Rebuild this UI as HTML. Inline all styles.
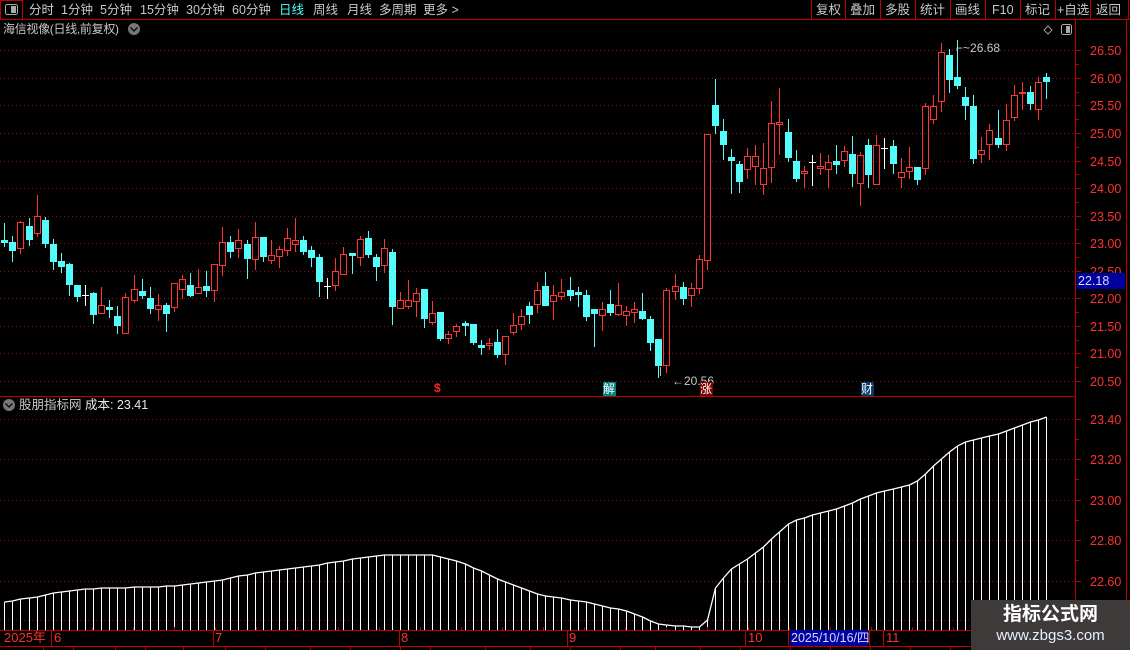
<!DOCTYPE html>
<html><head><meta charset="utf-8">
<style>
*{margin:0;padding:0;box-sizing:border-box}
body{width:1130px;height:650px;background:#000;overflow:hidden;position:relative;font-family:"Liberation Sans","Noto Sans CJK SC",sans-serif;color:#c8c8c8}
.t{position:absolute;white-space:nowrap;font-size:12.5px;line-height:14px}
svg{position:absolute;left:0;top:0}
</style></head><body>
<svg id="s" width="1130" height="650" xmlns="http://www.w3.org/2000/svg"></svg>

<div class="t" style="left:29px;top:3px;color:#d0d0d0;word-spacing:0">分时</div>
<div class="t" style="left:61px;top:3px">1分钟</div>
<div class="t" style="left:100px;top:3px">5分钟</div>
<div class="t" style="left:140px;top:3px">15分钟</div>
<div class="t" style="left:186px;top:3px">30分钟</div>
<div class="t" style="left:232px;top:3px">60分钟</div>
<div class="t" style="left:279px;top:3px;color:#54fcfc">日线</div>
<div class="t" style="left:313px;top:3px">周线</div>
<div class="t" style="left:347px;top:3px">月线</div>
<div class="t" style="left:379px;top:3px">多周期</div>
<div class="t" style="left:423px;top:3px">更多 &gt;</div>

<div class="t" style="left:816px;top:3px">复权</div>
<div class="t" style="left:850px;top:3px">叠加</div>
<div class="t" style="left:885px;top:3px">多股</div>
<div class="t" style="left:920px;top:3px">统计</div>
<div class="t" style="left:955px;top:3px">画线</div>
<div class="t" style="left:992px;top:3px">F10</div>
<div class="t" style="left:1025px;top:3px">标记</div>
<div class="t" style="left:1057px;top:3px">+自选</div>
<div class="t" style="left:1096px;top:3px">返回</div>

<div class="t" style="left:3px;top:22px;font-size:12px;letter-spacing:-0.3px">海信视像(日线,前复权)</div>
<div class="t" style="left:19px;top:398px;font-size:12.5px">股朋指标网 <span style="color:#e8e8e8">成本: 23.41</span></div>

<div class="t" style="left:672px;top:374px;font-size:12px">←20.56</div>
<div class="t" style="left:956px;top:41px;font-size:12px">⌐~26.68</div>

<div class="t" style="left:1077px;top:273px;width:48px;height:16px;background:#0000a0;color:#d8d8ff;padding-left:1px;font-size:12.5px;line-height:16px">22.18</div>

<div class="t" style="left:434px;top:381px;color:#ff2020;font-weight:bold;font-size:12px">$</div>
<div class="t" style="left:603px;top:382px;width:13px;height:14px;background:#008080;color:#fff;font-size:12px;line-height:14px">解</div>
<div class="t" style="left:700px;top:382px;width:13px;height:14px;background:#800000;color:#fff;font-size:12px;line-height:14px">涨</div>
<div class="t" style="left:861px;top:382px;width:13px;height:14px;background:#0a3a6a;color:#fff;font-size:12px;line-height:14px">财</div>

<div class="t" style="left:4px;top:631px;color:#ff3030;font-size:13px">2025年</div>
<div class="t" style="left:54px;top:631px;color:#ff3030;font-size:13px">6</div>
<div class="t" style="left:215px;top:631px;color:#ff3030;font-size:13px">7</div>
<div class="t" style="left:401px;top:631px;color:#ff3030;font-size:13px">8</div>
<div class="t" style="left:569px;top:631px;color:#ff3030;font-size:13px">9</div>
<div class="t" style="left:748px;top:631px;color:#ff3030;font-size:13px">10</div>
<div class="t" style="left:790px;top:630px;width:78px;height:16px;background:#0000a0;color:#d8d8ff;font-size:12.5px;line-height:16px;padding-left:1px">2025/10/16/四</div>
<div class="t" style="left:886px;top:631px;color:#ff3030;font-size:13px">11</div>

<div style="position:absolute;left:971px;top:600px;width:159px;height:50px;background:#3e3a3a"></div>
<div class="t" style="left:971px;top:604px;width:159px;text-align:center;color:#fff;font-weight:bold;font-size:19px;line-height:22px">指标公式网</div>
<div class="t" style="left:971px;top:627px;width:159px;text-align:center;color:#e8f0ff;font-size:15px;line-height:18px">www.zbgs3.com</div>

<script>
var s=document.getElementById('s'),h='';
function L(x1,y1,x2,y2,c,d){h+='<line x1="'+x1+'" y1="'+y1+'" x2="'+x2+'" y2="'+y2+'" stroke="'+c+'" stroke-width="1"'+(d?' stroke-dasharray="1 3"':'')+'/>';}
function T(x,y,t,c){h+='<text x="'+x+'" y="'+y+'" fill="'+c+'" font-size="12.5" font-family="Liberation Sans,sans-serif">'+t+'</text>';}
L(0,19.5,1130,19.5,'#c00000');
h+='<rect x="0.5" y="0.5" width="22" height="19" fill="none" stroke="#c00000"/>';
h+='<rect x="5.5" y="4.5" width="12" height="10" rx="2" fill="none" stroke="#aaa"/><rect x="11" y="6" width="5" height="7" fill="#aaa"/>';
[811,845,880,915,950,985,1020,1055,1090,1128].forEach(function(x){L(x+.5,0,x+.5,19,'#c00000');});
h+='<circle cx="134" cy="29" r="6" fill="#777"/><path d="M130.5 27.5 L134 31 L137.5 27.5" stroke="#111" stroke-width="1.5" fill="none"/>';
h+='<circle cx="9" cy="405" r="6" fill="#777"/><path d="M5.5 403.5 L9 407 L12.5 403.5" stroke="#111" stroke-width="1.5" fill="none"/>';
h+='<path d="M1048 26 L1052 30 L1048 34 L1044 30 Z" fill="none" stroke="#999"/>';
h+='<rect x="1061.5" y="24.5" width="10" height="10" rx="2" fill="none" stroke="#aaa"/><rect x="1066" y="26" width="4" height="7" fill="#aaa"/>';
L(1075.5,20,1075.5,650,'#c00000');L(1126.5,20,1126.5,650,'#c00000');
L(0,396.5,1075,396.5,'#c00000');
for(var p=20.5;p<=26.51;p+=0.5){var y=Math.round(50.3+(26.5-p)*55.1)+.5;L(0,y,1075,y,'#8a1010',1);L(1076,y,1081,y,'#c00000');
 T(1090,y+4.5,p.toFixed(2),'#ff3030');
 if(p>20.6)L(1076,Math.round(50.3+(26.75-p)*55.1)+.5,1079,Math.round(50.3+(26.75-p)*55.1)+.5,'#c00000');}
[[419,'23.40'],[459,'23.20'],[500,'23.00'],[540,'22.80'],[581,'22.60'],[620,'']].forEach(function(a){L(0,a[0]+.5,1075,a[0]+.5,'#8a1010',1);L(1076,a[0]+.5,1081,a[0]+.5,'#c00000');if(a[1])T(1090,a[0]+5,a[1],'#ff3030');L(1076,a[0]+20.5,1079,a[0]+20.5,'#c00000');});
var D="c,240,242,223,246|c,242,250,236,261|r,222,248,221,253|c,226,239,218,245|r,216,233,195,236|c,220,243,217,247|c,244,261,239,269|c,261,266,253,272|c,264,284,263,295|c,285,296,285,301|w,295,295,285,305|c,293,314,292,323|r,305,313,287,313|c,307,309,300,317|c,316,325,306,333|r,297,333,293,333|r,289,300,275,302|c,291,295,279,298|c,298,308,287,313|r,305,309,294,320|c,305,313,303,331|r,283,307,283,311|r,279,289,275,298|c,285,295,273,296|r,287,293,269,293|c,286,290,271,296|r,264,290,264,301|r,242,265,227,275|c,242,251,236,257|r,240,248,229,257|c,244,258,240,278|r,237,259,222,269|c,237,256,237,261|r,255,260,240,263|r,249,256,246,267|r,238,250,228,255|r,240,244,218,251|c,240,251,236,254|c,250,257,246,266|c,257,281,254,296|w,286,286,278,298|r,271,285,258,290|r,254,274,247,274|c,253,255,253,273|r,239,257,236,265|c,238,254,231,257|c,257,266,254,280|r,248,265,239,272|c,252,306,249,324|r,300,308,292,308|r,300,306,280,308|r,293,301,288,316|c,289,318,289,327|r,313,322,301,324|c,312,338,312,340|r,334,338,331,343|r,326,331,324,336|c,323,325,321,335|c,324,342,324,344|c,345,347,340,354|r,343,345,338,349|c,342,354,329,357|r,336,354,336,364|r,325,332,313,334|r,316,324,309,329|c,306,314,302,323|r,290,304,282,312|c,286,305,272,305|r,295,301,285,319|r,292,296,279,299|c,290,295,277,300|c,292,294,287,306|c,295,316,290,320|c,309,313,309,346|r,309,315,302,330|c,304,312,290,315|r,305,314,283,315|r,311,315,306,325|r,309,312,302,322|c,311,318,293,319|c,319,342,316,350|c,339,365,339,377|r,290,365,288,372|r,286,291,274,299|c,287,298,282,304|r,288,295,283,306|r,259,288,255,293|r,134,260,134,269|c,105,125,79,133|c,131,144,119,159|c,157,160,149,193|c,164,181,161,192|r,156,169,148,178|r,156,166,145,184|r,168,184,143,194|r,123,167,101,182|r,122,124,88,154|c,132,157,119,161|c,161,178,150,181|r,171,173,166,187|w,162,162,155,185|r,166,168,153,174|r,162,169,155,187|c,161,164,145,173|r,151,160,146,166|c,154,173,136,186|r,155,183,152,205|c,145,174,139,187|r,145,184,135,184|w,148,148,138,168|c,146,163,140,173|r,172,177,158,187|r,167,171,147,178|c,167,179,167,184|r,106,168,103,174|r,106,119,95,123|r,52,101,43,111|c,55,79,49,92|c,77,85,40,88|c,97,105,87,119|c,106,158,95,163|r,150,154,137,162|r,130,144,124,159|c,138,144,110,147|r,120,144,104,150|r,95,117,85,120|r,92,93,82,109|c,92,103,86,109|r,82,109,77,119|c,77,81,73,98";
var C=D.split('|'),CY='#54fcfc',RD='#ff3434';
var xs=[];
C.forEach(function(e,i){var a=e.split(','),t=a[0],bt=+a[1],bb=+a[2],wt=+a[3],wb=+a[4];
 var x=Math.round(4.3+i*8.075);xs.push(x);var xc=x+.5;
 var col=t=='c'?CY:(t=='r'?RD:'#fff');
 if(bb-bt<2){L(xc,wt,xc,wb+1,col);L(x-3,bt+.5,x+4,bt+.5,col);if(bb>bt)L(x-3,bb+.5,x+4,bb+.5,col);return;}
 if(t=='c'){L(xc,wt,xc,wb+1,col);h+='<rect x="'+(x-3)+'" y="'+bt+'" width="7" height="'+(bb-bt+1)+'" fill="'+col+'"/>';}
 else{L(xc,wt,xc,bt,col);L(xc,bb+1,xc,wb+1,col);h+='<rect x="'+(x-2.5)+'" y="'+(bt+.5)+'" width="6" height="'+(bb-bt)+'" fill="none" stroke="'+col+'"/>';}
});
L(660.5,367,660.5,376,'#bbb');
var K=[[4,602],[40,596],[65,591],[100,588],[160,587],[210,582],[250,574],[330,563],[380,555],[430,555],[460,562],[500,580],[540,595],[590,603],[630,612],[660,625],[700,627],[707,620],[715,588],[730,570],[760,550],[770,540],[790,522],[820,513],[840,508],[870,495],[900,487],[915,483],[940,460],[960,443],[990,436],[1010,430],[1030,422],[1050,416]];
function f(x){for(var j=0;j<K.length-1;j++){if(x<=K[j+1][0]){var r=(x-K[j][0])/(K[j+1][0]-K[j][0]);return K[j][1]+r*(K[j+1][1]-K[j][1]);}}return K[K.length-1][1];}
var pts=[];
xs.forEach(function(x){var y=Math.round(f(x));pts.push((x+.5)+','+y);L(x+.5,y,x+.5,630,'#fff');});
h+='<polyline points="'+pts.join(' ')+'" fill="none" stroke="#fff" stroke-width="1.3"/>';
L(0,630.5,1075,630.5,'#c00000');L(0,646.5,1075,646.5,'#c00000');
[51,213,399,567,745,788,869,883].forEach(function(x){L(x+.5,630,x+.5,646,'#c00000');});
for(var x=92;x<1075;x+=41)L(x+.5,627,x+.5,630,'#c00000');
[43,73,115,145,183,225,265,310,350,400,430,485,530,570,620,655,700,740,790,830,870,910,950,990,1040].forEach(function(x){L(x+.5,646,x+.5,650,'#c00000');});
s.innerHTML=h;
</script>
</body></html>
